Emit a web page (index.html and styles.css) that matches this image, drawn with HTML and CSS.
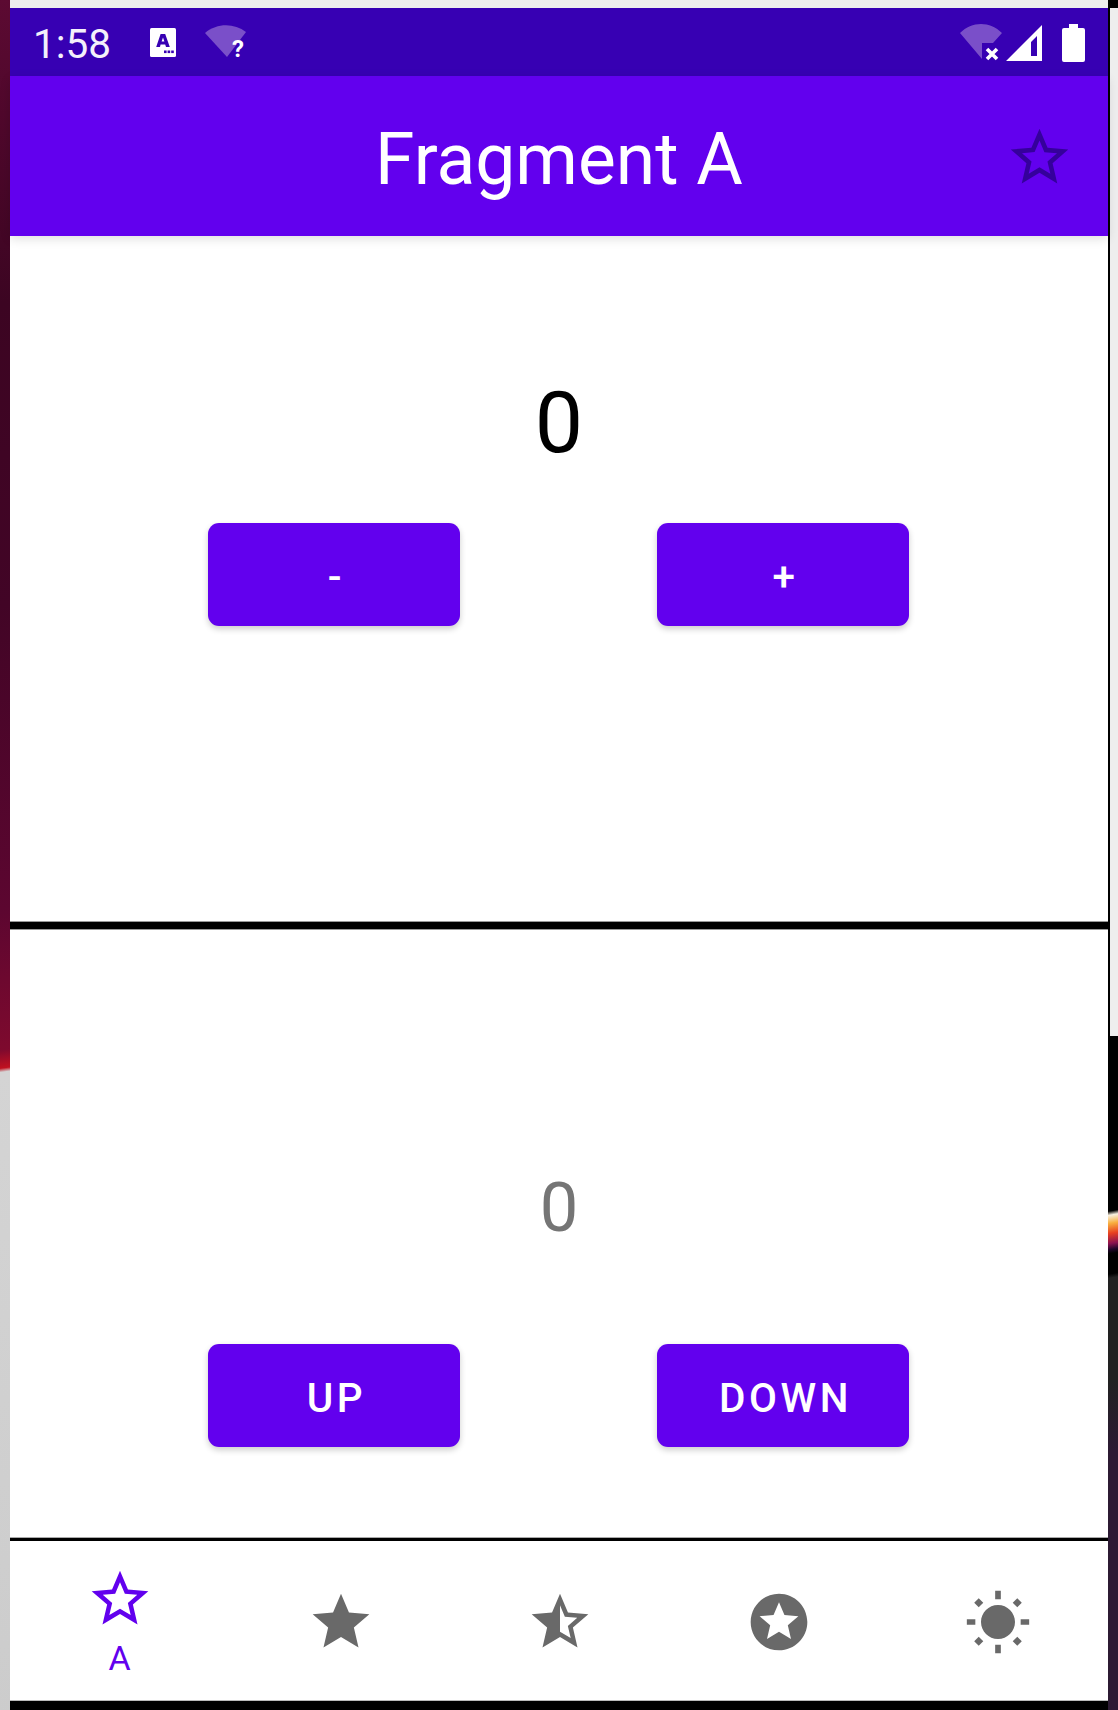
FILE: index.html
```html
<html>

    <head>
        <meta charset="UTF-8">
        <meta name="viewport" content="width=device-width, initial-scale=1.0">
        <title>Fragment A</title>
        <link rel="stylesheet" href="styles.css">
    </head>

    <body>
        <div class="desktop">
            <div class="edge edge-left"></div>

            <div class="phone">
                <div class="top-gap"></div>

                <div class="status-bar">
                    <span class="clock">1:58</span>
                    <svg class="ic-a" viewBox="0 0 26 29">
                        <rect width="26" height="29" rx="1.5" fill="#fff"/>
                        <path d="M10.6 6h4.6l4.6 13h-3.8l-.8-2.6h-4.6L10 19H6.2zM11.6 13.6h2.8L13 9.4z" fill="#3700b3" fill-rule="evenodd"/>
                        <rect x="14" y="22.5" width="2.6" height="2.6" fill="#3700b3"/>
                        <rect x="17.6" y="22.5" width="2.6" height="2.6" fill="#3700b3"/>
                        <rect x="21.2" y="22.5" width="2.6" height="2.6" fill="#3700b3"/>
                    </svg>
                    <svg class="ic-wifi-q" viewBox="0 0 42 40">
                        <path d="M0 8C12 -2 29 -2 41 7L22 32z" fill="#7a4fc9"/>
                        <text x="27" y="32" class="q-mark">?</text>
                    </svg>
                    <span class="status-space"></span>
                    <svg class="ic-wifi-x" viewBox="0 0 44 37">
                        <path d="M0 9C12 -3 30 -3 42 9L33 19H22V35z" fill="#7a4fc9"/>
                        <path d="M27 25l10 10M37 25l-10 10" stroke="#fff" stroke-width="3.6" fill="none"/>
                    </svg>
                    <svg class="ic-signal" viewBox="0 0 36 36">
                        <path d="M36 0V36H0zM31 11L25 17V31H31z" fill="#fff" fill-rule="evenodd"/>
                    </svg>
                    <svg class="ic-battery" viewBox="0 0 23 38">
                        <path d="M7 0h9v4h5a2 2 0 0 1 2 2v30a2 2 0 0 1-2 2H2a2 2 0 0 1-2-2V6a2 2 0 0 1 2-2h5z" fill="#fff"/>
                    </svg>
                </div>

                <div class="app-bar">
                    <span></span>
                    <h1 class="title">Fragment A</h1>
                    <svg class="ic-action" viewBox="0 0 24 24">
                        <path d="M22 9.24l-7.19-.62L12 2 9.19 8.63 2 9.24l5.46 4.73L5.82 21 12 17.27 18.18 21l-1.63-7.03L22 9.24zM12 15.4l-3.76 2.27 1-4.28-3.32-2.88 4.38-.38L12 6.1l1.71 4.04 4.38.38-3.32 2.88 1 4.28L12 15.4z"/>
                    </svg>
                </div>

                <div class="fragment fragment-top">
                    <div class="count">0</div>
                    <div class="btn-row">
                        <button class="btn">-</button>
                        <button class="btn">+</button>
                    </div>
                </div>

                <div class="divider"></div>

                <div class="fragment fragment-bottom">
                    <div class="count-small">0</div>
                    <div class="btn-row">
                        <button class="btn">UP</button>
                        <button class="btn">DOWN</button>
                    </div>
                </div>

                <div class="nav-line"></div>

                <div class="nav">
                    <div class="nav-item active">
                        <svg class="nav-icon" viewBox="0 0 24 24">
                            <path d="M22 9.24l-7.19-.62L12 2 9.19 8.63 2 9.24l5.46 4.73L5.82 21 12 17.27 18.18 21l-1.63-7.03L22 9.24zM12 15.4l-3.76 2.27 1-4.28-3.32-2.88 4.38-.38L12 6.1l1.71 4.04 4.38.38-3.32 2.88 1 4.28L12 15.4z"/>
                        </svg>
                        <span class="nav-label">A</span>
                    </div>
                    <div class="nav-item">
                        <svg class="nav-icon" viewBox="0 0 24 24">
                            <path d="M12 17.27L18.18 21l-1.64-7.03L22 9.24l-7.19-.61L12 2 9.19 8.63 2 9.24l5.46 4.73L5.82 21z"/>
                        </svg>
                    </div>
                    <div class="nav-item">
                        <svg class="nav-icon" viewBox="0 0 24 24">
                            <path d="M22 9.24l-7.19-.62L12 2 9.19 8.63 2 9.24l5.46 4.73L5.82 21 12 17.27 18.18 21l-1.63-7.03L22 9.24zM12 15.4V6.1l1.71 4.04 4.38.38-3.32 2.88 1 4.28L12 15.4z"/>
                        </svg>
                    </div>
                    <div class="nav-item">
                        <svg class="nav-icon" viewBox="0 0 24 24">
                            <path d="M12 2C6.47 2 2 6.48 2 12s4.47 10 10 10 10-4.48 10-10S17.53 2 12 2zm4.24 16L12 15.45 7.77 18l1.12-4.81-3.73-3.23 4.92-.42L12 5l1.92 4.53 4.92.42-3.73 3.23L16.23 18z"/>
                        </svg>
                    </div>
                    <div class="nav-item">
                        <svg class="nav-icon" viewBox="0 0 24 24">
                            <path d="M12 6c-3.31 0-6 2.69-6 6s2.69 6 6 6 6-2.69 6-6-2.69-6-6-6zM11 1h2v3h-2zM11 20h2v3h-2zM1 11h3v2H1zM20 11h3v2h-3zM5.2 3.6l1.6 1.6-1.6 1.6-1.6-1.6zM18.8 3.6l1.6 1.6-1.6 1.6-1.6-1.6zM5.2 17.2l1.6 1.6-1.6 1.6-1.6-1.6zM18.8 17.2l1.6 1.6-1.6 1.6-1.6-1.6z"/>
                        </svg>
                    </div>
                </div>

                <div class="bottom-gap"></div>
            </div>

            <div class="edge edge-right"></div>
        </div>
    </body>

</html>
```

FILE: styles.css
```css
html, body
{
    margin: 0;
    padding: 0;
    background-color: #000000;
}

.desktop
{
    display: flex;
    width: 1118px;
    height: 1710px;
    overflow: hidden;
    font-family: "Roboto", "Liberation Sans", sans-serif;
}

.edge
{
    flex: 0 0 10px;
}

.edge-left
{
    background: linear-gradient(172deg, #5c0a32 0, #3c0522 300px, #420526 600px, #5c0630 900px, #7e0a2e 1040px, #c01020 1058px, #d4d4d4 1062px, #cccccc 1710px);
}

.edge-right
{
    background: linear-gradient(90deg, #000000 0, #000000 2px, #eeeeee 2px) 0 8px / 100% 1028px no-repeat,
                linear-gradient(170deg, #000000 0, #000000 1193px, #f8f0e0 1197px, #f8b040 1205px, #e84020 1215px, #8a1050 1225px, #20052a 1231px, #000000 1235px, #000000 1255px, #222222 1259px, #222222 1360px, #2c1a33 1430px);
}

.phone
{
    flex: 1;
    display: flex;
    flex-direction: column;
    background-color: #ffffff;
}

.top-gap
{
    height: 8px;
    background-color: #eeeeee;
}

.status-bar
{
    height: 68px;
    display: flex;
    align-items: center;
    padding-left: 23px;
    padding-right: 23px;
    background-color: #3700b3;
}

.clock
{
    font-size: 40.5px;
    color: #f4f0fb;
    width: 117px;
    margin-top: 3px;
}

.ic-a
{
    width: 26px;
    height: 29px;
    margin-top: 1px;
}

.ic-wifi-q
{
    width: 42px;
    height: 40px;
    margin-left: 29px;
    margin-top: 6px;
}

.q-mark
{
    font-size: 24px;
    font-weight: 700;
    fill: #ffffff;
}

.status-space
{
    flex: 1;
}

.ic-wifi-x
{
    width: 44px;
    height: 37px;
}

.ic-signal
{
    width: 36px;
    height: 36px;
    margin-left: 2px;
    margin-top: 2px;
}

.ic-battery
{
    width: 23px;
    height: 38px;
    margin-left: 20px;
    margin-top: 2px;
}

.app-bar
{
    height: 160px;
    display: grid;
    grid-template-columns: 1fr auto 1fr;
    align-items: center;
    background-color: #6200ee;
    position: relative;
    box-shadow: 0 3px 10px rgba(0, 0, 0, 0.12);
}

.title
{
    margin: 6px 0 0 0;
    font-size: 71.4px;
    font-weight: 400;
    color: #ffffff;
}

.ic-action
{
    width: 69px;
    height: 69px;
    justify-self: end;
    margin-top: 2px;
    margin-right: 34px;
    fill: #35009c;
}

.fragment
{
    display: flex;
    flex-direction: column;
    align-items: center;
}

.fragment-top
{
    height: 685px;
    padding-top: 137px;
    box-sizing: border-box;
}

.fragment-bottom
{
    height: 607px;
    padding-top: 238px;
    box-sizing: border-box;
}

.count
{
    font-size: 86px;
    line-height: 100px;
    color: #000000;
}

.count-small
{
    font-size: 68.6px;
    line-height: 80px;
    color: #757575;
}

.fragment-top .btn-row
{
    margin-top: 50px;
}

.fragment-bottom .btn-row
{
    margin-top: 96px;
}

.btn-row
{
    display: flex;
    gap: 197px;
    margin-right: 1px;
}

.btn
{
    width: 252px;
    height: 103px;
    padding: 5px 0 0 5px;
    border: 0;
    border-radius: 11px;
    font-family: inherit;
    font-size: 40.5px;
    font-weight: 500;
    letter-spacing: 0.0892em;
    color: #ffffff;
    background-color: #6200ee;
    box-shadow: 0 3px 6px rgba(0, 0, 0, 0.2);
}

.divider
{
    height: 9px;
    background-color: #000000;
    border-top: 1px solid #999999;
    border-bottom: 1px solid #999999;
    box-sizing: border-box;
}

.nav-line
{
    height: 4px;
    background-color: #000000;
    border-top: 1px solid #aaaaaa;
    box-sizing: border-box;
}

.nav
{
    height: 159px;
    display: flex;
}

.nav-item
{
    flex: 1 1 0;
    box-sizing: border-box;
    display: flex;
    flex-direction: column;
    align-items: center;
    justify-content: center;
    padding-top: 3px;
}

.nav-item.active
{
    justify-content: flex-start;
    padding-top: 24px;
    padding-right: 2px;
}

.nav-icon
{
    width: 68px;
    height: 68px;
    fill: #696969;
}

.active .nav-icon
{
    fill: #6200ee;
}

.nav-label
{
    font-size: 34px;
    line-height: 42px;
    margin-top: 4px;
    color: #6200ee;
}

.bottom-gap
{
    flex: 1;
    background-color: #000000;
    border-top: 1px solid #bbbbbb;
}
```
